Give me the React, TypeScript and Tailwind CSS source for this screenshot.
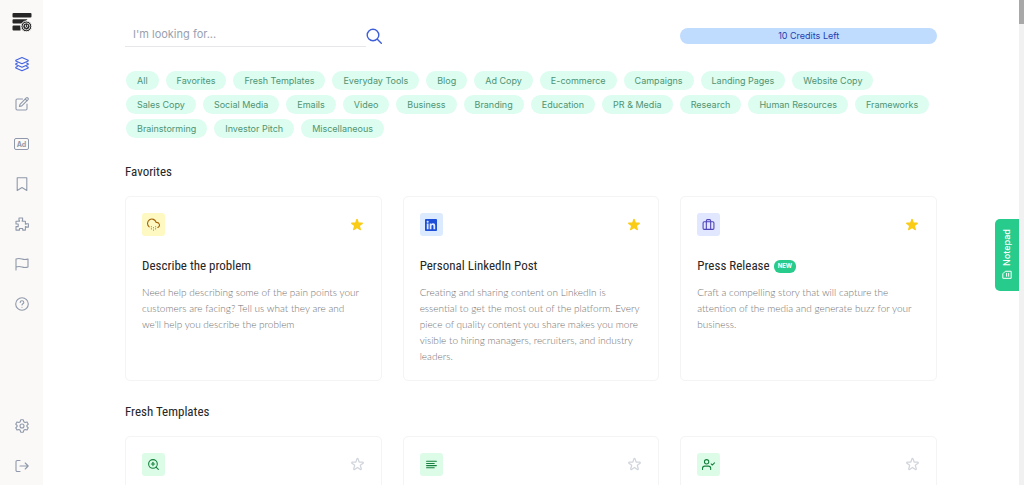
import type { ReactNode } from 'react'
import { RiLinkedinBoxFill } from 'react-icons/ri'
import { FiAlignLeft, FiBriefcase, FiCloudSnow, FiUserCheck, FiZoomIn } from 'react-icons/fi'
import { HiOutlineStar, HiStar } from 'react-icons/hi'

type Template = {
  title?: string
  description?: string
  label: string
  icon: ReactNode
  tint: string
  isNew?: boolean
  favorite?: boolean
}

const categories = [
  'All', 'Favorites', 'Fresh Templates', 'Everyday Tools', 'Blog', 'Ad Copy', 'E-commerce',
  'Campaigns', 'Landing Pages', 'Website Copy', 'Sales Copy', 'Social Media', 'Emails', 'Video',
  'Business', 'Branding', 'Education', 'PR & Media', 'Research', 'Human Resources', 'Frameworks',
  'Brainstorming', 'Investor Pitch', 'Miscellaneous',
]

const favorites: Template[] = [
  {
    title: 'Describe the problem',
    label: 'Describe the problem',
    description:
      "Need help describing some of the pain points your customers are facing? Tell us what they are and we'll help you describe the problem",
    icon: <FiCloudSnow className="size-[13px]" />,
    tint: 'bg-[#fef9c3] text-[#a16207]',
    favorite: true,
  },
  {
    title: 'Personal LinkedIn Post',
    label: 'Personal LinkedIn Post',
    description:
      'Creating and sharing content on LinkedIn is essential to get the most out of the platform. Every piece of quality content you share makes you more visible to hiring managers, recruiters, and industry leaders.',
    icon: <RiLinkedinBoxFill className="size-4" />,
    tint: 'bg-[#dbeafe] text-[#1d4ed8]',
    favorite: true,
  },
  {
    title: 'Press Release',
    label: 'Press Release',
    description:
      'Craft a compelling story that will capture the attention of the media and generate buzz for your business.',
    icon: <FiBriefcase className="size-[13px]" />,
    tint: 'bg-[#e0e7ff] text-[#5145b8]',
    isNew: true,
    favorite: true,
  },
]

const freshTemplates: Template[] = [
  { label: 'Keyword search', icon: <FiZoomIn className="size-[13px]" />, tint: 'bg-[#dcfce7] text-[#15803d]' },
  { label: 'Summary', icon: <FiAlignLeft className="size-[13px]" />, tint: 'bg-[#dcfce7] text-[#15803d]' },
  { label: 'Persona', icon: <FiUserCheck className="size-[13px]" />, tint: 'bg-[#dcfce7] text-[#15803d]' },
]

function LineIcon({ children }: { children: ReactNode }) {
  return (
    <svg viewBox="0 0 16 16" className="size-4" fill="none" stroke="currentColor" strokeWidth="1.1" strokeLinecap="round" strokeLinejoin="round">
      {children}
    </svg>
  )
}

const navItems = [
  {
    name: 'Templates',
    icon: (
      <LineIcon>
        <path d="M8 1.5 14.2 4.2v.7L8 7.8 1.8 4.9v-.7Z" />
        <path d="M3.4 7 1.8 7.8v.6L8 11.3l6.2-2.9v-.6L12.6 7M3.4 10.5l-1.6.8v.6L8 14.8l6.2-2.9v-.6l-1.6-.8" />
      </LineIcon>
    ),
  },
  {
    name: 'Editor',
    icon: (
      <LineIcon>
        <path d="M8.5 3H3.2A1.2 1.2 0 0 0 2 4.2v8.6A1.2 1.2 0 0 0 3.2 14h8.6a1.2 1.2 0 0 0 1.2-1.2V8" />
        <path d="m6 8.3 6.3-6.5c.9-.9 2.7.8 1.8 1.8l-6.3 6.3-2.4.6Z M11.2 3l1.8 1.8" />
      </LineIcon>
    ),
  },
  {
    name: 'Ads',
    icon: (
      <span className="flex h-3 w-[15px] shrink-0 items-center justify-center rounded-[2px] border border-[#8f99ab] text-[7px] leading-none font-bold">
        Ad
      </span>
    ),
  },
  {
    name: 'Saved',
    icon: (
      <LineIcon>
        <path d="M3.2 1.8h9.6v12.6L8 11.6l-4.8 2.8Z" />
      </LineIcon>
    ),
  },
  {
    name: 'Integrations',
    icon: (
      <LineIcon>
        <path d="M2 5.2h3.5V4.6H5V2h3.6v2.6h-.4v.6h3.2v3h.6v-.5h2.4v3.4H12v-.5h-.6v3.5H8.7v-1.6H5.5v1.6H2v-3.5h2.2V8H2Z" />
      </LineIcon>
    ),
  },
  {
    name: 'Reports',
    icon: (
      <LineIcon>
        <path d="M2 14V3c2-.8 4-.7 6 0s4 .7 6 0v8c-2 .7-4 .7-6 0s-4-.7-6 0" />
      </LineIcon>
    ),
  },
  {
    name: 'Help',
    icon: (
      <LineIcon>
        <circle cx="8" cy="8" r="6.3" />
        <path d="M6.2 6.4c0-2.3 3.6-2.3 3.6 0 0 1.3-1.8 1.3-1.8 2.5M8 11.2v.1" />
      </LineIcon>
    ),
  },
]

const footerItems = [
  {
    name: 'Settings',
    icon: (
      <LineIcon>
        <path d="M6.7 1.8h2.6l.5 1.9 1.3.8 1.9-.6 1.3 2.3-1.4 1.3v1l1.4 1.3-1.3 2.3-1.9-.6-1.3.8-.5 1.9H6.7l-.5-1.9-1.3-.8-1.9.6-1.3-2.3 1.4-1.3v-1L1.7 6.2 3 3.9l1.9.6 1.3-.8Z" />
        <circle cx="8" cy="8" r="2" />
      </LineIcon>
    ),
  },
  {
    name: 'Log out',
    icon: (
      <LineIcon>
        <path d="M6 2.5H3.2A1.2 1.2 0 0 0 2 3.7v8.6a1.2 1.2 0 0 0 1.2 1.2H6M6 8h8M11.2 5 14.2 8l-3 3" />
      </LineIcon>
    ),
  },
]

function Logo() {
  return (
    <svg viewBox="0 0 20 20" className="size-5 text-neutral-800">
      <g fill="currentColor">
        <rect x=".5" y="1" width="19" height="4.4" rx="1" />
        <path d="M1.5 7.2h14l-4 4.4h-10a1 1 0 0 1-1-1V8.2a1 1 0 0 1 1-1Z" />
        <path d="M1.5 13.6h7v4.8h-7a1 1 0 0 1-1-1v-2.8a1 1 0 0 1 1-1Z" />
        <circle cx="14.4" cy="14.4" r="5.4" stroke="#faf9f7" strokeWidth="1" />
      </g>
      <circle cx="14.4" cy="14.4" r="3.5" fill="none" stroke="#faf9f7" strokeWidth=".8" />
      <path d="M13.4 12.8v2.6M15.4 12.8v2l-1.4 1.4" fill="none" stroke="#faf9f7" strokeWidth=".9" />
    </svg>
  )
}

function Sidebar() {
  return (
    <aside className="flex w-[43px] shrink-0 flex-col items-center bg-[#faf9f7] pt-3 pb-[11px] text-[#8f99ab]">
      <a href="#home" aria-label="Home">
        <Logo />
      </a>
      <nav className="mt-6 flex flex-col gap-6">
        {navItems.map((item, index) => (
          <a
            key={item.name}
            href={`#${item.name}`}
            aria-label={item.name}
            className={index === 0 ? 'flex size-4 items-center justify-center text-[#4264e2]' : 'flex size-4 items-center justify-center'}
          >
            {item.icon}
          </a>
        ))}
      </nav>
      <div className="mt-auto flex flex-col gap-6">
        {footerItems.map((item) => (
          <button key={item.name} type="button" aria-label={item.name}>
            {item.icon}
          </button>
        ))}
      </div>
    </aside>
  )
}

function TemplateCard({ template }: { template: Template }) {
  return (
    <article className="min-h-[185px] rounded-[5px] border border-gray-100 p-4">
      <div className="flex items-center justify-between">
        <span className={`flex size-[23px] items-center justify-center rounded-[3px] ${template.tint}`}>
          {template.icon}
        </span>
        <button type="button" aria-label={`Favorite ${template.label}`}>
          {template.favorite ? (
            <HiStar className="size-4 text-[#facc15]" />
          ) : (
            <HiOutlineStar className="size-[15px] text-gray-300" />
          )}
        </button>
      </div>
      {template.title && (
        <h3 className="mt-5 flex items-center gap-1 font-['Liberation_Sans_Narrow','Roboto_Condensed',Roboto,sans-serif] text-[13px] leading-5 text-neutral-800">
          {template.title}
          {template.isNew && (
            <span className="flex h-[13px] items-center rounded-md bg-[#27cb8b] px-1 font-['Inter',sans-serif] text-[6px] leading-none font-bold text-white">
              NEW
            </span>
          )}
        </h3>
      )}
      {template.description && (
        <p className="mt-2 font-['Lato',sans-serif] text-[10px] leading-4 font-light text-neutral-500">
          {template.description}
        </p>
      )}
    </article>
  )
}

function TemplateSection({ title, templates }: { title: string; templates: Template[] }) {
  return (
    <section>
      <h2 className="font-['Liberation_Sans_Narrow','Roboto_Condensed',Roboto,sans-serif] text-[13px] leading-5 text-neutral-800">
        {title}
      </h2>
      <div className="mt-3.5 grid grid-cols-3 gap-[21px]">
        {templates.map((template) => (
          <TemplateCard key={template.label} template={template} />
        ))}
      </div>
    </section>
  )
}

export default function App() {
  return (
    <div className="flex h-screen overflow-hidden bg-white font-['Inter',sans-serif]">
      <Sidebar />

      <main className="relative flex-1 overflow-hidden">
        <div className="px-[82px]">
          <header className="grid grid-cols-3 items-center gap-[21px] pt-[22px]">
            <form className="flex items-center">
              <input
                type="text"
                aria-label="Search templates"
                placeholder="I'm looking for..."
                className="h-[25px] min-w-0 flex-1 border-b border-gray-200 px-2 text-[11px] text-gray-700 outline-none placeholder:text-gray-400"
              />
              <button type="submit" aria-label="Search" className="mt-0.5 text-[#3f5fd8]">
                <LineIcon>
                  <circle cx="7" cy="7" r="5.8" strokeWidth="1.4" />
                  <path d="m11.3 11.3 4 4" strokeWidth="1.4" />
                </LineIcon>
              </button>
            </form>
            <div className="col-start-3 mt-0.5 rounded-full bg-[#bfdbfe] text-center text-[9px] leading-4 text-[#1e40af]">
              10 Credits Left
            </div>
          </header>

          <div className="mt-6 flex flex-wrap gap-x-[7px] gap-y-[5px] pl-px">
            {categories.map((category) => (
              <button
                key={category}
                type="button"
                className="rounded-full bg-[#dcfdf0] px-[11px] text-[9px] leading-[19px] text-[#4f9474]"
              >
                {category}
              </button>
            ))}
          </div>

          <div className="mt-6 flex flex-col gap-[21px]">
            <TemplateSection title="Favorites" templates={favorites} />
            <TemplateSection title="Fresh Templates" templates={freshTemplates} />
          </div>
        </div>

        <button
          type="button"
          className="absolute top-[219px] right-0 flex h-[72px] w-6 rotate-180 items-center justify-center gap-1 rounded-r-[5px] bg-[#27cb8b] text-[9px] font-medium text-white [writing-mode:vertical-rl]"
        >
          <svg viewBox="0 0 12 12" className="size-2.5 rotate-90" fill="none" stroke="currentColor" strokeWidth="1.2">
            <path d="M2 1h5.5L10.5 4v7H2ZM4 5.5h4.5M4 8h4.5" />
          </svg>
          Notepad
        </button>
      </main>

      <div className="w-[5px] shrink-0 bg-[#f1f1f1]">
        <div className="h-6 bg-[#a8a8a8]" />
      </div>
    </div>
  )
}
